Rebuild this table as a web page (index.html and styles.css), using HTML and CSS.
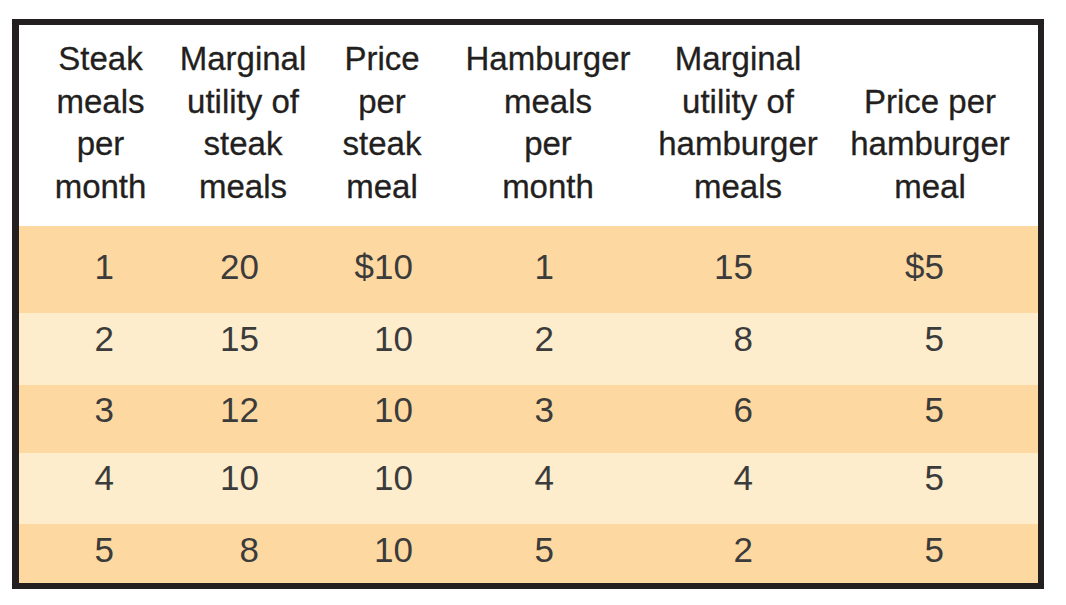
FILE: index.html
```html
<!DOCTYPE html>
<html lang="en">
<head>
<meta charset="utf-8">
<title>Steak and hamburger meals</title>
<link rel="stylesheet" href="styles.css">
</head>
<body>
<div class="frame">
  <div class="row head">
    <div class="th">Steak<br>meals<br>per<br>month</div>
    <div class="th">Marginal<br>utility of<br>steak<br>meals</div>
    <div class="th">Price<br>per<br>steak<br>meal</div>
    <div class="th">Hamburger<br>meals<br>per<br>month</div>
    <div class="th">Marginal<br>utility of<br>hamburger<br>meals</div>
    <div class="th">Price per<br>hamburger<br>meal</div>
  </div>
  <div class="row body dark r1">
    <div class="td c1">1</div><div class="td c2">20</div><div class="td c3">$10</div>
    <div class="td c4">1</div><div class="td c5">15</div><div class="td c6">$5</div>
  </div>
  <div class="row body light r2">
    <div class="td c1">2</div><div class="td c2">15</div><div class="td c3">10</div>
    <div class="td c4">2</div><div class="td c5">8</div><div class="td c6">5</div>
  </div>
  <div class="row body dark r3">
    <div class="td c1">3</div><div class="td c2">12</div><div class="td c3">10</div>
    <div class="td c4">3</div><div class="td c5">6</div><div class="td c6">5</div>
  </div>
  <div class="row body light r4">
    <div class="td c1">4</div><div class="td c2">10</div><div class="td c3">10</div>
    <div class="td c4">4</div><div class="td c5">4</div><div class="td c6">5</div>
  </div>
  <div class="row body dark r5">
    <div class="td c1">5</div><div class="td c2">8</div><div class="td c3">10</div>
    <div class="td c4">5</div><div class="td c5">2</div><div class="td c6">5</div>
  </div>
</div>
</body>
</html>
```
FILE: styles.css
```css
html, body {
  margin: 0;
  padding: 0;
  background: #ffffff;
}

body {
  font-family: "Liberation Sans", Arial, sans-serif;
  padding: 19px 0 0 12px;
}

.frame {
  box-sizing: border-box;
  width: 1032px;
  border-style: solid;
  border-color: #231f20;
  border-width: 6px 6px 6px 7px;
  background: #ffffff;
}

.row {
  display: grid;
  grid-template-columns: 163px 122px 156px 176px 204px 180px;
}

.head {
  padding: 13px 0 18px;
  align-items: end;
}

.th {
  justify-self: center;
  text-align: center;
  white-space: nowrap;
  font-size: 33px;
  line-height: 42.5px;
  color: #231f20;
  -webkit-text-stroke: 0.3px #231f20;
}

.dark { background: #fdd9a1; }
.light { background: #feedcd; }

.td {
  font-size: 35px;
  line-height: 40px;
  color: #3b3b3b;
  text-align: right;
  white-space: nowrap;
}

.c1 { padding-right: 68px; }
.c2 { padding-right: 45px; }
.c3 { padding-right: 47px; }
.c4 { padding-right: 82px; }
.c5 { padding-right: 87px; }
.c6 { padding-right: 76px; }

.r1 { padding: 21px 0 26px; }
.r2 { padding: 6px 0 26px; }
.r3 { padding: 5px 0 23px; }
.r4 { padding: 5px 0 26px; }
.r5 { padding: 6px 0 13px; }
```
